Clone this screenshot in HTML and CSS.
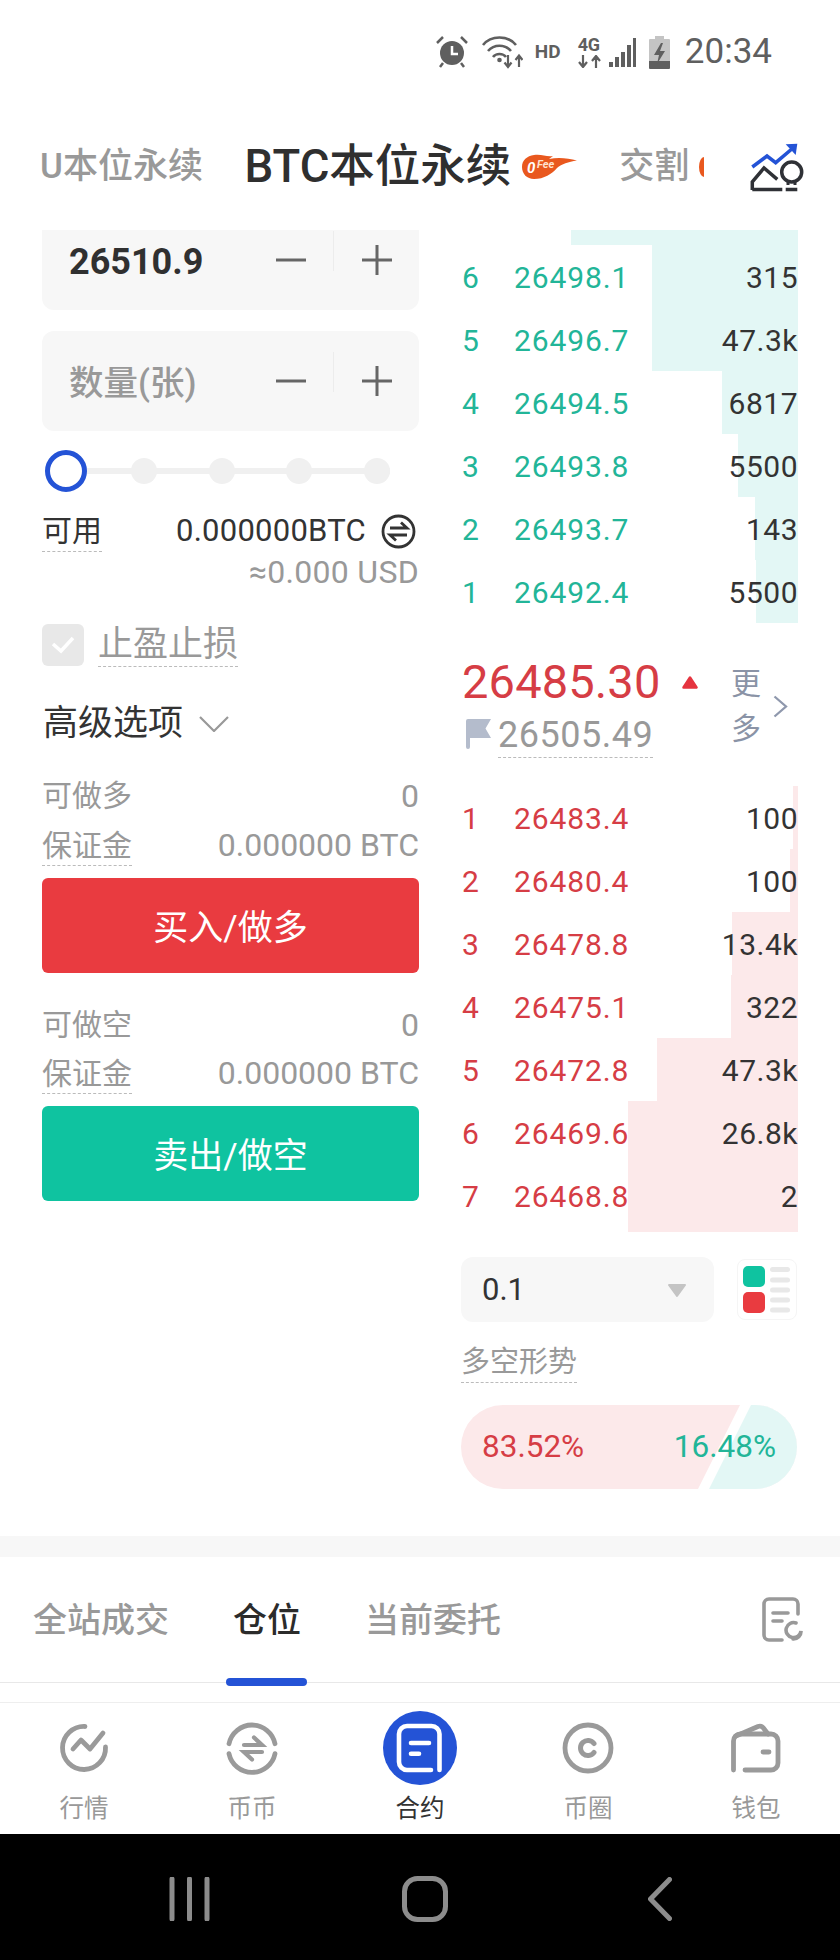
FILE: index.html
```html
<!DOCTYPE html>
<html lang="zh">
<head>
<meta charset="utf-8">
<title>BTC本位永续</title>
<link rel="stylesheet" href="styles.css">
</head>
<body>
<svg class="defs" width="0" height="0" aria-hidden="true">
  <symbol id="minus" viewBox="0 0 30 30"><path d="M0 15H30" stroke="#666" stroke-width="3"/></symbol>
  <symbol id="plus" viewBox="0 0 30 30"><path d="M0 15H30M15 0V30" stroke="#666" stroke-width="3"/></symbol>
</svg>

<header class="status">
  <svg class="st-alarm" width="32" height="32" viewBox="0 0 32 32"><circle cx="16" cy="17" r="12" fill="#5f5f5f"/><path d="M16 10V18H22" fill="none" stroke="#fff" stroke-width="2.500"/><path d="M1 7L7 1M31 7L25 1M7 27L4 31M25 27L28 31" stroke="#5f5f5f" stroke-width="2.500"/></svg>
  <svg class="st-wifi" width="42" height="34" viewBox="0 0 42 34"><path d="M2 10C10 0 27 0 35 10M7 16C13 9 24 9 30 16M12 22C15 18 22 18 25 22" fill="none" stroke="#5f5f5f" stroke-width="2.600"/><circle cx="18.500" cy="25" r="2.300" fill="#5f5f5f"/><path d="M27 20V31M23.500 27.500L27 32L30.500 27.500M38 32V21M34.500 25L38 20.500L41.500 25" fill="none" stroke="#5f5f5f" stroke-width="2.200"/></svg>
  <span class="st-hd">HD</span>
  <span class="st-net"><span class="st-4g">4G</span><svg width="23" height="13" viewBox="0 0 23 13"><path d="M5 0V11M1 7L5 12L9 7M18 13V2M14 6L18 1L22 6" fill="none" stroke="#5f5f5f" stroke-width="2.200"/></svg></span>
  <svg class="st-signal" width="28" height="29" viewBox="0 0 28 29"><path d="M0 24h4v5H0zM6 19h4v10H6zM12 14h4v15h-4zM18 7h4v22h-4zM24 0h3v29h-3z" fill="#5f5f5f"/></svg>
  <svg class="st-batt" width="21" height="33" viewBox="0 0 21 33"><path d="M6 0h9v3h5a1 1 0 0 1 1 1V25H0V4a1 1 0 0 1 1-1h5z" fill="#c4c4c4"/><path d="M0 25H21V32a1 1 0 0 1-1 1H1a1 1 0 0 1-1-1z" fill="#5f5f5f"/><path d="M12 7L5 19H10L8 28L16 15H11L14 7z" fill="#5f5f5f"/></svg>
  <span class="st-time">20:34</span>
</header>

<nav class="tabs">
  <span class="tab-dim">U本位永续</span>
  <span class="tab-main">BTC本位永续</span>
  <svg class="fee" width="55" height="26" viewBox="0 0 55 26">
    <path d="M12 1C20 0 24 3 31 2L27 5C36 3 46 4 55 6.500C46 8 40 10 35 14C30 20 22 25 12 25C5 25 0 20 0 13C0 6 5 2 12 1Z" fill="#e9581e"/>
    <text x="5" y="18.500" class="fee-zero">0</text>
    <text x="15" y="14" class="fee-text">Fee</text>
  </svg>
  <span class="tab-dim tab-next">交割</span>
  <i class="fee-clip"></i>
  <svg class="chart-icon" width="56" height="52" viewBox="0 0 56 52"><path d="M3.300 26L18 15L26.700 21.700L44 7" fill="none" stroke="#2453d6" stroke-width="3.500"/><path d="M36.700 3.300L48.300 2.700L46.700 14z" fill="#2453d6"/><path d="M3.300 49V41L15 27L28.300 38.300M3.300 48.500H33.300M36.700 48.500H48.300" fill="none" stroke="#2f3136" stroke-width="3.500"/><circle cx="42.700" cy="31" r="10" fill="none" stroke="#2f3136" stroke-width="3.500"/><path d="M39 40V44M46 40V44" stroke="#2f3136" stroke-width="3"/></svg>
</nav>

<main class="content">
  <section class="form">
    <div class="box box-scrolled">
      <span class="box-value">26510.9</span>
      <svg class="ctl" width="30" height="30"><use href="#minus"/></svg>
      <i class="ctl-div"></i>
      <svg class="ctl" width="30" height="30"><use href="#plus"/></svg>
    </div>
    <div class="box box-qty">
      <span class="box-hint">数量(张)</span>
      <svg class="ctl" width="30" height="30"><use href="#minus"/></svg>
      <i class="ctl-div"></i>
      <svg class="ctl" width="30" height="30"><use href="#plus"/></svg>
    </div>
    <div class="slider"><i class="ring"></i><i class="dot"></i><i class="dot"></i><i class="dot"></i><i class="dot"></i></div>
    <div class="avail">
      <span class="dash lbl-dark">可用</span>
      <span class="avail-val">0.000000BTC
        <svg width="35" height="35" viewBox="0 0 35 35"><circle cx="17.500" cy="17.500" r="15.500" fill="none" stroke="#333" stroke-width="2.800"/><path d="M9 14H26L20 8.500M26 21H9L15 26.500" fill="none" stroke="#333" stroke-width="2.800"/></svg>
      </span>
    </div>
    <div class="usd">≈0.000 USD</div>
    <div class="check-row">
      <span class="check"><svg width="24" height="18" viewBox="0 0 24 18"><path d="M2 8L10 15L22 2" fill="none" stroke="#fff" stroke-width="3.500"/></svg></span>
      <span class="dash check-label">止盈止损</span>
    </div>
    <div class="advanced">高级选项
      <svg width="30" height="16" viewBox="0 0 30 16"><path d="M1 1L15 15L29 1" fill="none" stroke="#999" stroke-width="2.200"/></svg>
    </div>
    <div class="kv kv-first"><span>可做多</span><span>0</span></div>
    <div class="kv kv-second"><span class="dash">保证金</span><span>0.000000 BTC</span></div>
    <div class="btn btn-buy">买入/做多</div>
    <div class="kv kv-first kv-sell"><span>可做空</span><span>0</span></div>
    <div class="kv kv-second"><span class="dash">保证金</span><span>0.000000 BTC</span></div>
    <div class="btn btn-sell">卖出/做空</div>
  </section>

  <section class="market">
    <div class="book asks">
      <div class="row row-cut"><i class="bar" style="width:227px"></i></div>
      <div class="row"><i class="bar" style="width:146px"></i><span class="idx">6</span><span class="px">26498.1</span><span class="vol">315</span></div>
      <div class="row"><i class="bar" style="width:146px"></i><span class="idx">5</span><span class="px">26496.7</span><span class="vol">47.3k</span></div>
      <div class="row"><i class="bar" style="width:76px"></i><span class="idx">4</span><span class="px">26494.5</span><span class="vol">6817</span></div>
      <div class="row"><i class="bar" style="width:60px"></i><span class="idx">3</span><span class="px">26493.8</span><span class="vol">5500</span></div>
      <div class="row"><i class="bar" style="width:43px"></i><span class="idx">2</span><span class="px">26493.7</span><span class="vol">143</span></div>
      <div class="row"><i class="bar" style="width:42px"></i><span class="idx">1</span><span class="px">26492.4</span><span class="vol">5500</span></div>
    </div>

    <div class="mid">
      <div class="mid-left">
        <div class="last"><span class="last-px">26485.30</span><svg width="16" height="13" viewBox="0 0 16 13"><path d="M8 1.500L14.500 11.500H1.500z" fill="#e5343f" stroke="#e5343f" stroke-width="2.500" stroke-linejoin="round"/></svg></div>
        <div class="mark">
          <svg width="25" height="30" viewBox="0 0 25 30"><path d="M0 2a2 2 0 0 1 2-2H25L19.500 9.500L25 19H4V28a2 2 0 0 1-4 0z" fill="#b4bccc"/></svg>
          <span class="dash mark-px">26505.49</span>
        </div>
      </div>
      <div class="more">更<br>多</div>
      <svg class="more-arrow" width="15" height="23" viewBox="0 0 15 23"><path d="M1.500 1.500L13 11.500L1.500 21.500" fill="none" stroke="#8f98ad" stroke-width="2.300"/></svg>
    </div>

    <div class="book bids">
      <div class="row"><i class="bar" style="width:5px"></i><span class="idx">1</span><span class="px">26483.4</span><span class="vol">100</span></div>
      <div class="row"><i class="bar" style="width:8px"></i><span class="idx">2</span><span class="px">26480.4</span><span class="vol">100</span></div>
      <div class="row"><i class="bar" style="width:66px"></i><span class="idx">3</span><span class="px">26478.8</span><span class="vol">13.4k</span></div>
      <div class="row"><i class="bar" style="width:67px"></i><span class="idx">4</span><span class="px">26475.1</span><span class="vol">322</span></div>
      <div class="row"><i class="bar" style="width:141px"></i><span class="idx">5</span><span class="px">26472.8</span><span class="vol">47.3k</span></div>
      <div class="row"><i class="bar" style="width:170px"></i><span class="idx">6</span><span class="px">26469.6</span><span class="vol">26.8k</span></div>
      <div class="row row-last"><i class="bar" style="width:170px"></i><span class="idx">7</span><span class="px">26468.8</span><span class="vol">2</span></div>
    </div>

    <div class="depth-row">
      <div class="select"><span>0.1</span><svg width="20" height="16" viewBox="0 0 20 16"><path d="M2 3H18L10 14z" fill="#c4c4c4" stroke="#c4c4c4" stroke-width="2" stroke-linejoin="round"/></svg></div>
      <div class="layout-btn">
        <svg width="60" height="61" viewBox="0 0 60 61"><rect x="6" y="7" width="22" height="21" rx="5" fill="#0fc3a0"/><rect x="6" y="33" width="22" height="21" rx="5" fill="#e93b40"/><g fill="#e8e8e8"><rect x="33" y="8" width="20" height="5" rx="2.500"/><rect x="33" y="18.500" width="20" height="5" rx="2.500"/><rect x="33" y="28.500" width="20" height="5" rx="2.500"/><rect x="33" y="38.500" width="20" height="5" rx="2.500"/><rect x="33" y="48.500" width="20" height="5" rx="2.500"/></g></svg>
      </div>
    </div>
    <div class="trend-row"><span class="dash trend">多空形势</span></div>
    <div class="pill"><span class="pill-long">83.52%</span><span class="pill-short">16.48%</span></div>
  </section>
</main>

<div class="band"></div>

<div class="subtabs">
  <span class="subtab">全站成交</span>
  <span class="subtab subtab-on">仓位</span>
  <span class="subtab">当前委托</span>
  <svg class="orders-icon" width="41" height="45" viewBox="0 0 41 45"><path d="M36 17V7a5 5 0 0 0-5-5H7a5 5 0 0 0-5 5V38a5 5 0 0 0 5 5H20M11 16H26M11 24H20" fill="none" stroke="#999" stroke-width="3.600" stroke-linecap="round"/><path d="M34 26A7.500 7.500 0 1 0 39 34A7.500 7.500 0 0 1 31 42" fill="none" stroke="#999" stroke-width="3.600" stroke-linecap="round"/></svg>
</div>

<footer class="nav">
  <div class="nav-item">
    <svg width="74" height="74" viewBox="0 0 74 74"><g fill="none" stroke="#9a9a9a" stroke-width="4.800" stroke-linecap="round" stroke-linejoin="round"><path d="M38 15.500A21.500 21.500 0 1 0 58.500 36"/><path d="M26 38L34 29L43 38L56 22"/></g></svg>
    <span>行情</span>
  </div>
  <div class="nav-item">
    <svg width="74" height="74" viewBox="0 0 74 74"><g fill="none" stroke="#9a9a9a" stroke-width="4.800" stroke-linecap="round"><path d="M14 32.700A23.500 23.500 0 0 1 60 32.700"/><path d="M14 42.700A23.500 23.500 0 0 0 60 42.700"/><path d="M29 34H47L39 26.500M47 41H29L37 48.500" stroke-width="4.200"/></g></svg>
    <span>币币</span>
  </div>
  <div class="nav-item nav-on">
    <svg width="74" height="74" viewBox="0 0 74 74"><circle cx="37" cy="37" r="37" fill="#2453d6"/><g fill="none" stroke="#fff" stroke-width="4.600" stroke-linecap="round"><path d="M56.500 59V23a8 8 0 0 0-8-8H24a8 8 0 0 0-8 8V51a8 8 0 0 0 8 8H48"/><path d="M28 32H46M28 42.700H36"/></g></svg>
    <span>合约</span>
  </div>
  <div class="nav-item">
    <svg width="74" height="74" viewBox="0 0 74 74"><g fill="none" stroke="#9a9a9a"><circle cx="37" cy="37" r="23" stroke-width="4.800"/><path d="M43 32.500A7.500 7.500 0 1 0 43 41.500" stroke-width="5" stroke-linecap="round"/></g></svg>
    <span>币圈</span>
  </div>
  <div class="nav-item">
    <svg width="74" height="74" viewBox="0 0 74 74"><g fill="none" stroke="#9a9a9a" stroke-width="4.800" stroke-linecap="round" stroke-linejoin="round"><path d="M14.500 59V30a7 7 0 0 1 7-7H52a7 7 0 0 1 7 7V52a7 7 0 0 1-7 7H26"/><path d="M17 25L39 15.500a5 5 0 0 1 5 1L49 23M44 41H50"/></g></svg>
    <span>钱包</span>
  </div>
</footer>

<div class="sysbar">
  <svg width="41" height="44" viewBox="0 0 41 44"><path d="M3 2V42M20.500 2V42M38 2V42" stroke="#8c8c8c" stroke-width="5" stroke-linecap="round"/></svg>
  <svg width="46" height="46" viewBox="0 0 46 46"><rect x="2.500" y="2.500" width="41" height="41" rx="13" fill="none" stroke="#8c8c8c" stroke-width="5"/></svg>
  <svg width="24" height="44" viewBox="0 0 24 44"><path d="M21.500 2.500L2.500 22L21.500 41.500" fill="none" stroke="#8c8c8c" stroke-width="5" stroke-linecap="round" stroke-linejoin="round"/></svg>
</div>
</body>
</html>
```

FILE: styles.css
```css
* { box-sizing: border-box; }
html, body { margin: 0; padding: 0; }
body {
  width: 840px;
  height: 1960px;
  overflow: hidden;
  background: #fff;
  color: #333;
  font-family: Roboto, "Noto Sans CJK SC", sans-serif;
  display: flex;
  flex-direction: column;
}
i { font-style: normal; display: block; }
.defs { position: absolute; }

/* status bar */
.status {
  height: 110px;
  flex: none;
  display: flex;
  align-items: center;
  justify-content: flex-end;
  padding: 0 68px 6px 0;
  color: #5f5f5f;
}
.st-wifi { margin-left: 13px; }
.st-hd { margin-left: 12px; width: 26px; font-size: 19px; font-weight: 700; line-height: 20px; }
.st-net { margin-left: 17px; width: 23px; display: flex; flex-direction: column; gap: 1px; }
.st-4g { font-size: 18px; font-weight: 700; line-height: 18px; letter-spacing: -0.5px; }
.st-signal { margin-left: 8px; }
.st-batt { margin-left: 12px; }
.st-time { margin-left: 15px; font-size: 35px; line-height: 40px; }

/* product tabs */
.tabs {
  height: 120px;
  flex: none;
  display: flex;
  align-items: center;
  padding: 0 35px 6px 40px;
}
.tab-dim { font-size: 35px; font-weight: 500; color: #999; line-height: 48px; }
.tab-main { margin-left: 41.500px; font-size: 45.500px; font-weight: 500; color: #2f2f2f; line-height: 60px; }
.fee { margin-left: 11px; }
.tab-next { margin-left: 42px; }
.fee-clip {
  margin-left: 10px;
  width: 5px;
  height: 20px;
  background: #e9581e;
  border-radius: 5px 0 0 5px / 10px 0 0 10px;
}
.fee-zero { font: italic 700 15px Roboto, sans-serif; fill: #fff; }
.fee-text { font: italic 700 11px Roboto, sans-serif; fill: #ffe3d0; }
.chart-icon { margin-left: auto; }

/* main two columns */
.content {
  height: 1306px;
  flex: none;
  display: flex;
  overflow: hidden;
}
.form { width: 377px; margin-left: 42px; flex: none; }
.market { width: 337px; margin-left: 42px; flex: none; }

.box {
  height: 100px;
  border-radius: 12px;
  background: #f7f7f7;
  display: flex;
  align-items: center;
  padding: 0 27px;
}
.box-scrolled { margin-top: -20px; }
.box-qty { margin-top: 21px; }
.box-value { flex: 1; font-size: 36px; font-weight: 700; color: #303030; line-height: 44px; margin-top: 4px; }
.box-hint { flex: 1; font-size: 34.500px; font-weight: 500; color: #999; line-height: 44px; margin-top: 4px; }
.ctl-div { width: 1px; height: 40px; background: #ececec; margin: 0 28px 18px 27px; }

.slider {
  margin: 19px 29px 0 11px;
  height: 42px;
  display: flex;
  align-items: center;
  justify-content: space-between;
  background: linear-gradient(#f0f0f0, #f0f0f0) center / 100% 6px no-repeat;
}
.ring { width: 42px; height: 42px; margin: 0 -8px; border-radius: 50%; border: 5px solid #2453d6; background: #fff; flex: none; }
.dot { width: 26px; height: 26px; border-radius: 50%; background: #f0f0f0; flex: none; }

.dash { display: inline-block; border-bottom: 1px dashed #bbb; }
.avail {
  margin-top: 19px;
  display: flex;
  justify-content: space-between;
  align-items: flex-start;
  font-size: 30px;
}
.lbl-dark { line-height: 40px; color: #333; }
.avail-val { display: flex; align-items: center; gap: 15px; font-size: 31px; line-height: 40px; color: #333; padding-right: 3px; letter-spacing: 0.25px; }
.usd { text-align: right; font-size: 32px; line-height: 40px; color: #999; letter-spacing: 0.3px; }

.check-row { margin-top: 32px; display: flex; gap: 14px; align-items: flex-start; }
.check { width: 42px; height: 42px; border-radius: 6px; background: #e8e8e8; display: flex; align-items: center; justify-content: center; }
.check-label { font-size: 35px; line-height: 42px; color: #999; }
.advanced { margin-top: 35px; height: 44px; display: flex; align-items: center; gap: 16px; font-size: 35px; line-height: 44px; color: #333; padding-left: 1px; }

.kv { display: flex; justify-content: space-between; font-size: 30px; height: 41px; color: #999; }
.kv span:last-child { font-size: 32px; }
.kv-first { margin-top: 29px; line-height: 42px; }
.kv-second { margin-top: 9px; line-height: 41px; }
.kv-sell { margin-top: 31px; }
.kv-sell + .kv-second { margin-top: 8px; }
.btn { margin-top: 12px; height: 95px; padding-bottom: 3px; border-radius: 6px; display: flex; align-items: center; justify-content: center; color: #fff; font-size: 35px; }
.btn-buy { background: #e93b40; }
.btn-sell { background: #0fc3a0; }

/* order book */
.row {
  position: relative;
  height: 63px;
  display: flex;
  align-items: center;
  padding-top: 1px;
  font-size: 30px;
  letter-spacing: 0.9px;
}
.row-cut { height: 15px; padding-top: 0; }
.row-last { height: 68px; padding-bottom: 5px; }
.bar { position: absolute; top: 0; right: 0; bottom: 0; }
.asks .bar { background: #e3f7f5; }
.bids .bar { background: #fce9ea; }
.idx, .px, .vol { position: relative; }
.idx { width: 53px; padding-left: 1px; }
.px { flex: 1; }
.vol { color: #333; padding-right: 0; letter-spacing: 0.5px; }
.asks .idx, .asks .px { color: #22b598; }
.bids .idx, .bids .px { color: #d63d45; }

.mid { height: 163px; display: flex; align-items: flex-start; }
.mid-left { width: 270px; padding-top: 36px; }
.last { display: flex; align-items: center; gap: 21px; height: 46px; }
.last-px { font-size: 47px; line-height: 46px; font-weight: 400; color: #d63d45; padding-left: 1px; letter-spacing: 0.15px; }
.mark { margin-top: 8px; display: flex; align-items: flex-start; gap: 7px; padding-left: 5px; }
.mark svg { margin-top: 6px; }
.mark-px { font-size: 36px; line-height: 44px; color: #999; letter-spacing: 0.5px; }
.more { margin-top: 38px; font-size: 30px; line-height: 45px; width: 30px; color: #8a93a6; }
.more-arrow { margin: 72px 0 0 12px; }

.depth-row { margin-top: 25px; display: flex; justify-content: space-between; align-items: center; }
.select {
  width: 253px;
  height: 65px;
  border-radius: 12px;
  background: #f7f7f7;
  display: flex;
  align-items: center;
  justify-content: space-between;
  padding: 0 27px 0 21px;
  font-size: 31px;
}
.layout-btn { width: 60px; height: 61px; border: 1px solid #f5f5f5; border-radius: 8px; margin-right: 1px; overflow: hidden; }
.layout-btn svg { display: block; margin: -1px; }
.trend-row { margin-top: 20px; }
.trend { font-size: 29px; line-height: 40px; color: #999; }

.pill {
  position: relative;
  margin-top: 22px;
  height: 84px;
  width: 336px;
  border-radius: 42px;
  background: #fce9ea;
  overflow: hidden;
  display: flex;
  align-items: center;
  justify-content: space-between;
  padding: 0 21px 1px 21px;
  font-size: 31.500px;
}
.pill::before {
  content: "";
  position: absolute;
  inset: 0;
  background: #fff;
  clip-path: polygon(279px 0, 100% 0, 100% 100%, 237px 100%);
}
.pill::after {
  content: "";
  position: absolute;
  inset: 0;
  background: #e3f7f5;
  clip-path: polygon(290px 0, 100% 0, 100% 100%, 248px 100%);
}
.pill-long, .pill-short { position: relative; z-index: 1; }
.pill-long { color: #d63d45; }
.pill-short { color: #22b598; }

.band { height: 21px; flex: none; background: #f7f7f7; }

.subtabs {
  height: 126px;
  flex: none;
  border-bottom: 1px solid #e8e8e8;
  display: flex;
  align-items: center;
  padding: 0 37px 0 33px;
  gap: 64px;
  position: relative;
  font-size: 34px;
}
.subtab { position: relative; color: #999; font-weight: 500; line-height: 48px; }
.subtab-on { color: #2b2b2b; }
.subtab-on::after {
  content: "";
  position: absolute;
  left: -7px;
  right: -6px;
  top: 82px;
  height: 8px;
  border-radius: 4px;
  background: #2453d6;
}
.orders-icon { margin-left: auto; }

.nav {
  margin-top: 19px;
  height: 132px;
  flex: none;
  border-top: 1px solid #eee;
  display: flex;
  padding-top: 8px;
}
.nav-item {
  flex: 1;
  display: flex;
  flex-direction: column;
  align-items: center;
  font-size: 24.500px;
  line-height: 28px;
  color: #999;
}
.nav-item span { margin-top: 10px; }
.nav-on { color: #333; }

.sysbar {
  flex: none;
  height: 126px;
  background: #000;
  display: flex;
  align-items: center;
  padding-top: 4px;
}
.sysbar svg:nth-child(1) { margin-left: 169px; }
.sysbar svg:nth-child(2) { margin-left: 192px; }
.sysbar svg:nth-child(3) { margin-left: 200px; }
```
